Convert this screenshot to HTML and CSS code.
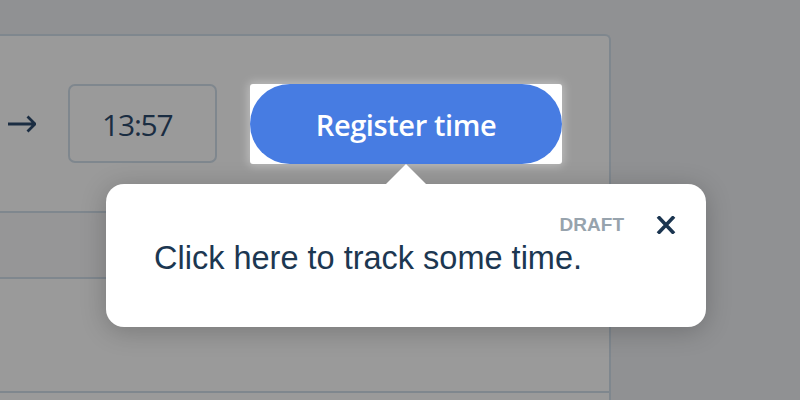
FILE: index.html
```html
<!DOCTYPE html>
<html lang="en">
<head>
<meta charset="utf-8">
<title>Register time</title>
<link rel="stylesheet" href="styles.css">
</head>
<body>
<div class="card">
  <div class="row row-main">
    <svg class="arrow" width="28" height="20" viewBox="0 0 28 20" aria-hidden="true">
      <path d="M0 10 H27 M19.5 2.5 L27 10 L19.5 17.5" fill="none" stroke="#1b2d42" stroke-width="2.8"/>
    </svg>
    <div class="time-box">13:57</div>
    <div class="highlight">
      <button class="register">Register time</button>
    </div>
  </div>
  <div class="row row-second"></div>
  <div class="row row-third"></div>
  <div class="row row-fourth"></div>
</div>

<div class="tooltip">
  <div class="tooltip-head">
    <span class="draft">DRAFT</span>
    <svg class="close" width="20" height="18" viewBox="0 0 20 18" aria-hidden="true">
      <path d="M2 0.5 L18 17.5 M18 0.5 L2 17.5" fill="none" stroke="#1b3550" stroke-width="3.6"/>
    </svg>
  </div>
  <p class="tooltip-text">Click here to track some time.</p>
</div>
</body>
</html>
```
FILE: styles.css
```css
html, body {
  margin: 0;
  padding: 0;
}

body {
  width: 800px;
  height: 400px;
  overflow: hidden;
  background: #909193;
  position: relative;
  font-family: "Open Sans", "Liberation Sans", sans-serif;
}

.card {
  margin: 34px 0 0 -20px;
  width: 631px;
  height: 366px;
  background: #9a9a9a;
  border: 2px solid #7f878e;
  border-bottom: none;
  border-radius: 6px 6px 0 0;
  box-sizing: border-box;
  overflow: hidden;
}

.row {
  border-bottom: 2px solid #7f878e;
}

.row-main {
  height: 177px;
  display: flex;
  align-items: flex-start;
  padding: 48px 0 0 26px;
  box-sizing: border-box;
}

.row-second {
  height: 64px;
  background: #969697;
}

.row-third {
  height: 112px;
}

.row-fourth {
  border-bottom: none;
}

.arrow {
  margin-top: 30px;
  flex: none;
}

.time-box {
  margin-left: 32px;
  width: 149px;
  height: 79px;
  box-sizing: border-box;
  border: 2px solid #7f878e;
  border-radius: 7px;
  display: flex;
  align-items: center;
  padding-left: 32px;
  padding-top: 2px;
  font-size: 30px;
  color: #1a2d42;
  letter-spacing: -1.2px;
}

.highlight {
  margin-left: 33px;
  width: 312px;
  height: 80px;
  background: #ffffff;
  border-radius: 3px;
  box-shadow: 0 0 10px 2px rgba(255, 255, 255, 0.35);
}

.register {
  display: block;
  width: 312px;
  height: 80px;
  border: none;
  border-radius: 40px;
  background: #477ce2;
  color: #ffffff;
  font-family: "Open Sans", "Liberation Sans", sans-serif;
  font-weight: 600;
  font-size: 29px;
  letter-spacing: -0.4px;
  padding: 0;
}

.tooltip {
  position: absolute;
  left: 106px;
  top: 184px;
  width: 600px;
  height: 143px;
  box-sizing: border-box;
  background: #ffffff;
  border-radius: 18px;
  box-shadow: 0 4px 26px rgba(0, 0, 0, 0.22);
  padding: 31px 30px 0 48px;
  font-family: "Liberation Sans", Arial, sans-serif;
}

.tooltip::before {
  content: "";
  position: absolute;
  left: 280px;
  top: -20px;
  border-left: 20px solid transparent;
  border-right: 20px solid transparent;
  border-bottom: 20px solid #ffffff;
}

.tooltip-head {
  display: flex;
  justify-content: flex-end;
  align-items: center;
  gap: 32px;
  height: 20px;
}

.draft {
  font-size: 19px;
  font-weight: 700;
  line-height: 20px;
  color: #97a3ad;
}

.close {
  flex: none;
}

.tooltip-text {
  margin: 5px 0 0;
  font-size: 32.5px;
  line-height: 37px;
  color: #1c3751;
}
```
